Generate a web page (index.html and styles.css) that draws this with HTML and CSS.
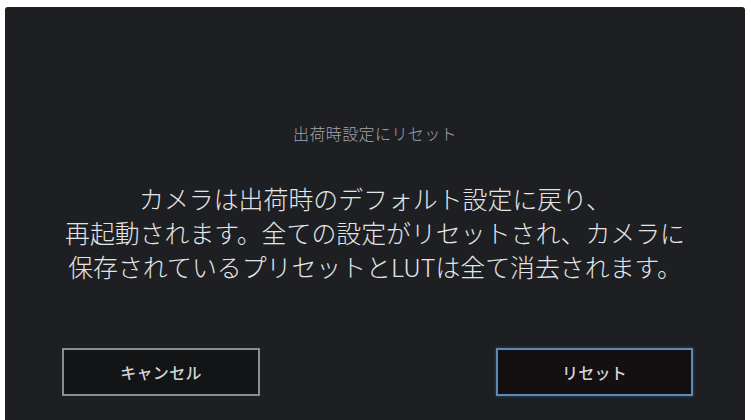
FILE: index.html
```html
<!DOCTYPE html>
<html lang="ja">
<head>
<meta charset="utf-8">
<title>出荷時設定にリセット</title>
<link rel="stylesheet" href="styles.css">
</head>
<body>
<div class="panel">
  <div class="title">出荷時設定にリセット</div>
  <div class="message">
    <div>カメラは出荷時のデフォルト設定に戻り、</div>
    <div>再起動されます。全ての設定がリセットされ、カメラに</div>
    <div>保存されているプリセットとLUTは全て消去されます。</div>
  </div>
  <div class="actions">
    <button class="btn btn-cancel">キャンセル</button>
    <button class="btn btn-reset">リセット</button>
  </div>
</div>
</body>
</html>
```

FILE: styles.css
```css
html, body {
  margin: 0;
  padding: 0;
  background: #ffffff;
}
body {
  width: 751px;
  height: 420px;
  overflow: hidden;
  font-family: "Noto Sans CJK JP", "Noto Sans", sans-serif;
}
.panel {
  margin: 7px 6px 0 5px;
  height: 413px;
  box-sizing: border-box;
  background: #1d1f22;
  border-radius: 3px 3px 0 0;
  display: flex;
  flex-direction: column;
  align-items: stretch;
  padding-top: 116px;
}
.title {
  text-align: center;
  font-size: 16px;
  font-weight: 300;
  line-height: 20px;
  color: #a4a6a8;
  letter-spacing: 0.4px;
}
.message {
  margin-top: 38px;
  text-align: center;
  font-size: 24.9px;
  font-weight: 300;
  line-height: 34px;
  color: #e4e5e6;
}
.actions {
  margin-top: 65px;
  display: flex;
  justify-content: space-between;
  padding: 0 52px 0 57px;
}
.btn {
  width: 198px;
  height: 48px;
  box-sizing: border-box;
  font-family: "Noto Sans CJK JP", "Noto Sans", sans-serif;
  font-size: 16px;
  font-weight: 500;
  color: #d2d3d4;
  padding: 0;
  margin: 0;
  letter-spacing: 0.3px;
}
.btn-cancel {
  background: #131416;
  border: 2px solid #8a8c8e;
}
.btn-reset {
  width: 197px;
  background: #140f10;
  border: 2px solid #5a88b8;
  box-shadow: 0 0 3px rgba(70, 130, 200, 0.5);
}
```
